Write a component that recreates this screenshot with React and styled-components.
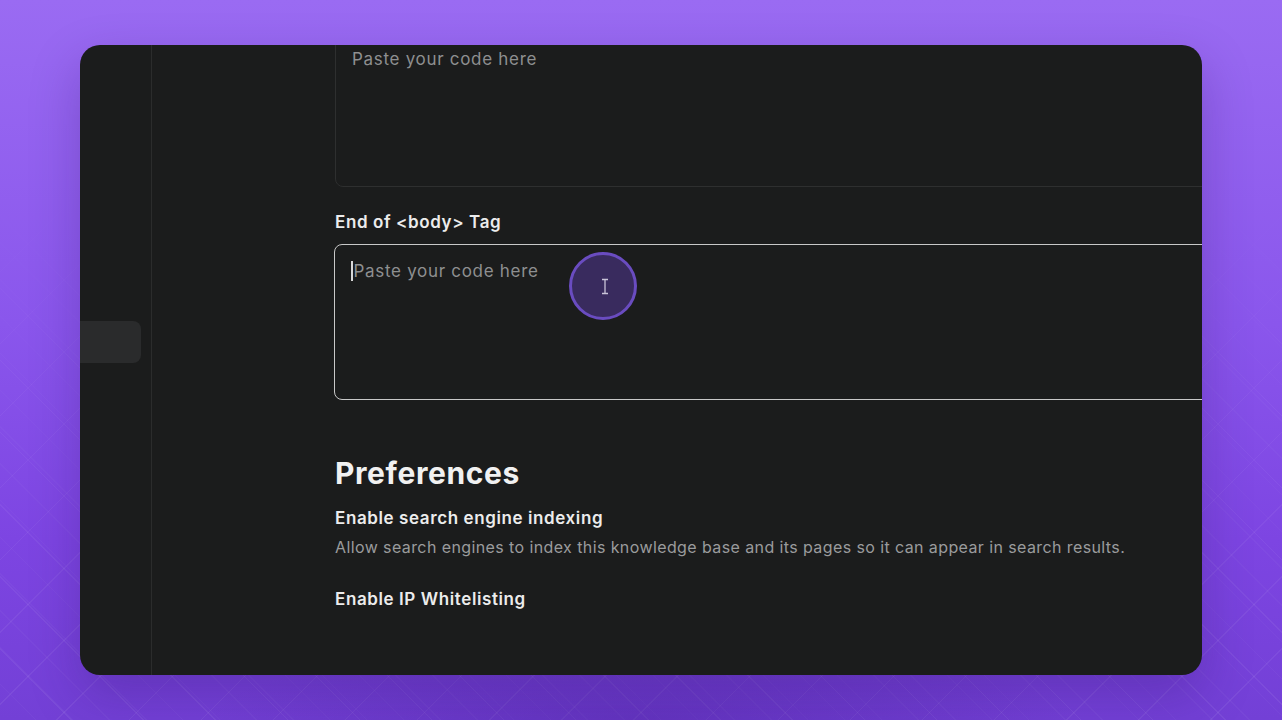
import React from 'react';
import styled, { createGlobalStyle } from 'styled-components';

const GlobalStyle = createGlobalStyle`
  html, body {
    margin: 0;
    padding: 0;
    width: 100%;
    height: 100%;
  }
  body {
    font-family: Inter, "Noto Sans", "Liberation Sans", sans-serif;
    -webkit-font-smoothing: antialiased;
  }
`;

const Backdrop = styled.div`
  position: relative;
  width: 1282px;
  height: 720px;
  overflow: hidden;
  background: linear-gradient(180deg, #9a6bf2 0%, #8a56ec 45%, #7d45e2 75%, #7340d6 100%);
  padding-top: 45px;
  box-sizing: border-box;

  &::before {
    content: '';
    position: absolute;
    inset: 0;
    background:
      repeating-linear-gradient(45deg, transparent 0 50px, rgba(255, 255, 255, 0.06) 50px 51px),
      repeating-linear-gradient(-45deg, transparent 0 50px, rgba(255, 255, 255, 0.06) 50px 51px),
      repeating-linear-gradient(45deg, transparent 0 25px, rgba(255, 255, 255, 0.03) 25px 26px);
    -webkit-mask-image: linear-gradient(180deg, transparent 25%, rgba(0, 0, 0, 0.7) 55%, #000 100%);
    mask-image: linear-gradient(180deg, transparent 25%, rgba(0, 0, 0, 0.7) 55%, #000 100%);
  }

  &::after {
    content: '';
    position: absolute;
    left: 200px;
    right: 200px;
    bottom: -80px;
    height: 160px;
    background: radial-gradient(ellipse at center, rgba(70, 30, 150, 0.35), transparent 70%);
  }
`;

const Window = styled.div`
  position: relative;
  z-index: 1;
  margin: 0 auto;
  width: 1122px;
  height: 630px;
  background: #1b1c1c;
  border-radius: 20px;
  overflow: hidden;
  display: flex;
  box-shadow: 0 20px 50px rgba(40, 10, 90, 0.25);
`;

const Rail = styled.aside`
  width: 72px;
  flex-shrink: 0;
  border-right: 1px solid #2b2c2c;
  padding-top: 276px;
  box-sizing: border-box;
`;

const RailItem = styled.div`
  margin-left: -20px;
  width: 81px;
  height: 42px;
  border-radius: 8px;
  background: #2a2b2c;
`;

const Main = styled.main`
  position: relative;
  flex: 1;
  padding-left: 183px;
  overflow: hidden;
`;

const Scroll = styled.div`
  margin-top: -14px;
  display: flex;
  flex-direction: column;
  width: 900px;
`;

const CodeBox = styled.div`
  height: 156px;
  box-sizing: border-box;
  border-radius: 8px;
  border: ${p => (p.$focused ? '1.5px solid #c8c8c8' : '1px solid #2e2f2f')};
  margin-left: ${p => (p.$focused ? '-1px' : '0')};
  padding: ${p => (p.$focused ? '14px 16px' : '15px 16px')};
  font-size: 17px;
  line-height: 24px;
  letter-spacing: 0.7px;
  color: #8e8f90;
`;

const Caret = styled.span`
  display: inline-block;
  width: 1.5px;
  height: 20px;
  margin-right: 1px;
  vertical-align: -4px;
  background: #d8d8d8;
`;

const FieldLabel = styled.label`
  display: block;
  margin: 23px 0 10px;
  font-size: 17px;
  line-height: 24px;
  font-weight: 600;
  letter-spacing: 0.6px;
  color: #ececec;
`;

const SectionTitle = styled.h2`
  margin: 55px 0 15px;
  font-size: 30px;
  line-height: 36px;
  font-weight: 700;
  letter-spacing: 0.6px;
  color: #f1f1f1;
`;

const OptionTitle = styled.div`
  font-size: 17px;
  line-height: 24px;
  font-weight: 600;
  letter-spacing: 0.6px;
  color: #ececec;
  margin-top: ${p => p.$gap || 0}px;
`;

const OptionHint = styled.div`
  margin-top: 5px;
  font-size: 16px;
  line-height: 24px;
  letter-spacing: 0.4px;
  color: #9a9b9c;
`;

const CursorRing = styled.div`
  position: absolute;
  left: 417px;
  top: 207px;
  width: 68px;
  height: 68px;
  box-sizing: border-box;
  border-radius: 50%;
  border: 3px solid #6a4cc0;
  background: rgba(60, 44, 100, 0.92);
  display: flex;
  align-items: center;
  justify-content: center;
  padding-left: 4px;
`;

const IBeam = () => (
  <svg width="10" height="17" viewBox="0 0 10 17" fill="none" stroke="#c9c3d8" strokeWidth="1.3">
    <path d="M2 1.5h6M2 15.5h6M5 1.5v14" />
  </svg>
);

export default function App() {
  return (
    <>
      <GlobalStyle />
      <Backdrop>
        <Window>
          <Rail>
            <RailItem />
          </Rail>
          <Main>
            <Scroll>
              <CodeBox>Paste your code here</CodeBox>
              <FieldLabel>End of &lt;body&gt; Tag</FieldLabel>
              <CodeBox $focused>
                <Caret />
                Paste your code here
              </CodeBox>
              <SectionTitle>Preferences</SectionTitle>
              <OptionTitle>Enable search engine indexing</OptionTitle>
              <OptionHint>
                Allow search engines to index this knowledge base and its pages so it can appear in search results.
              </OptionHint>
              <OptionTitle $gap={28}>Enable IP Whitelisting</OptionTitle>
            </Scroll>
            <CursorRing>
              <IBeam />
            </CursorRing>
          </Main>
        </Window>
      </Backdrop>
    </>
  );
}
